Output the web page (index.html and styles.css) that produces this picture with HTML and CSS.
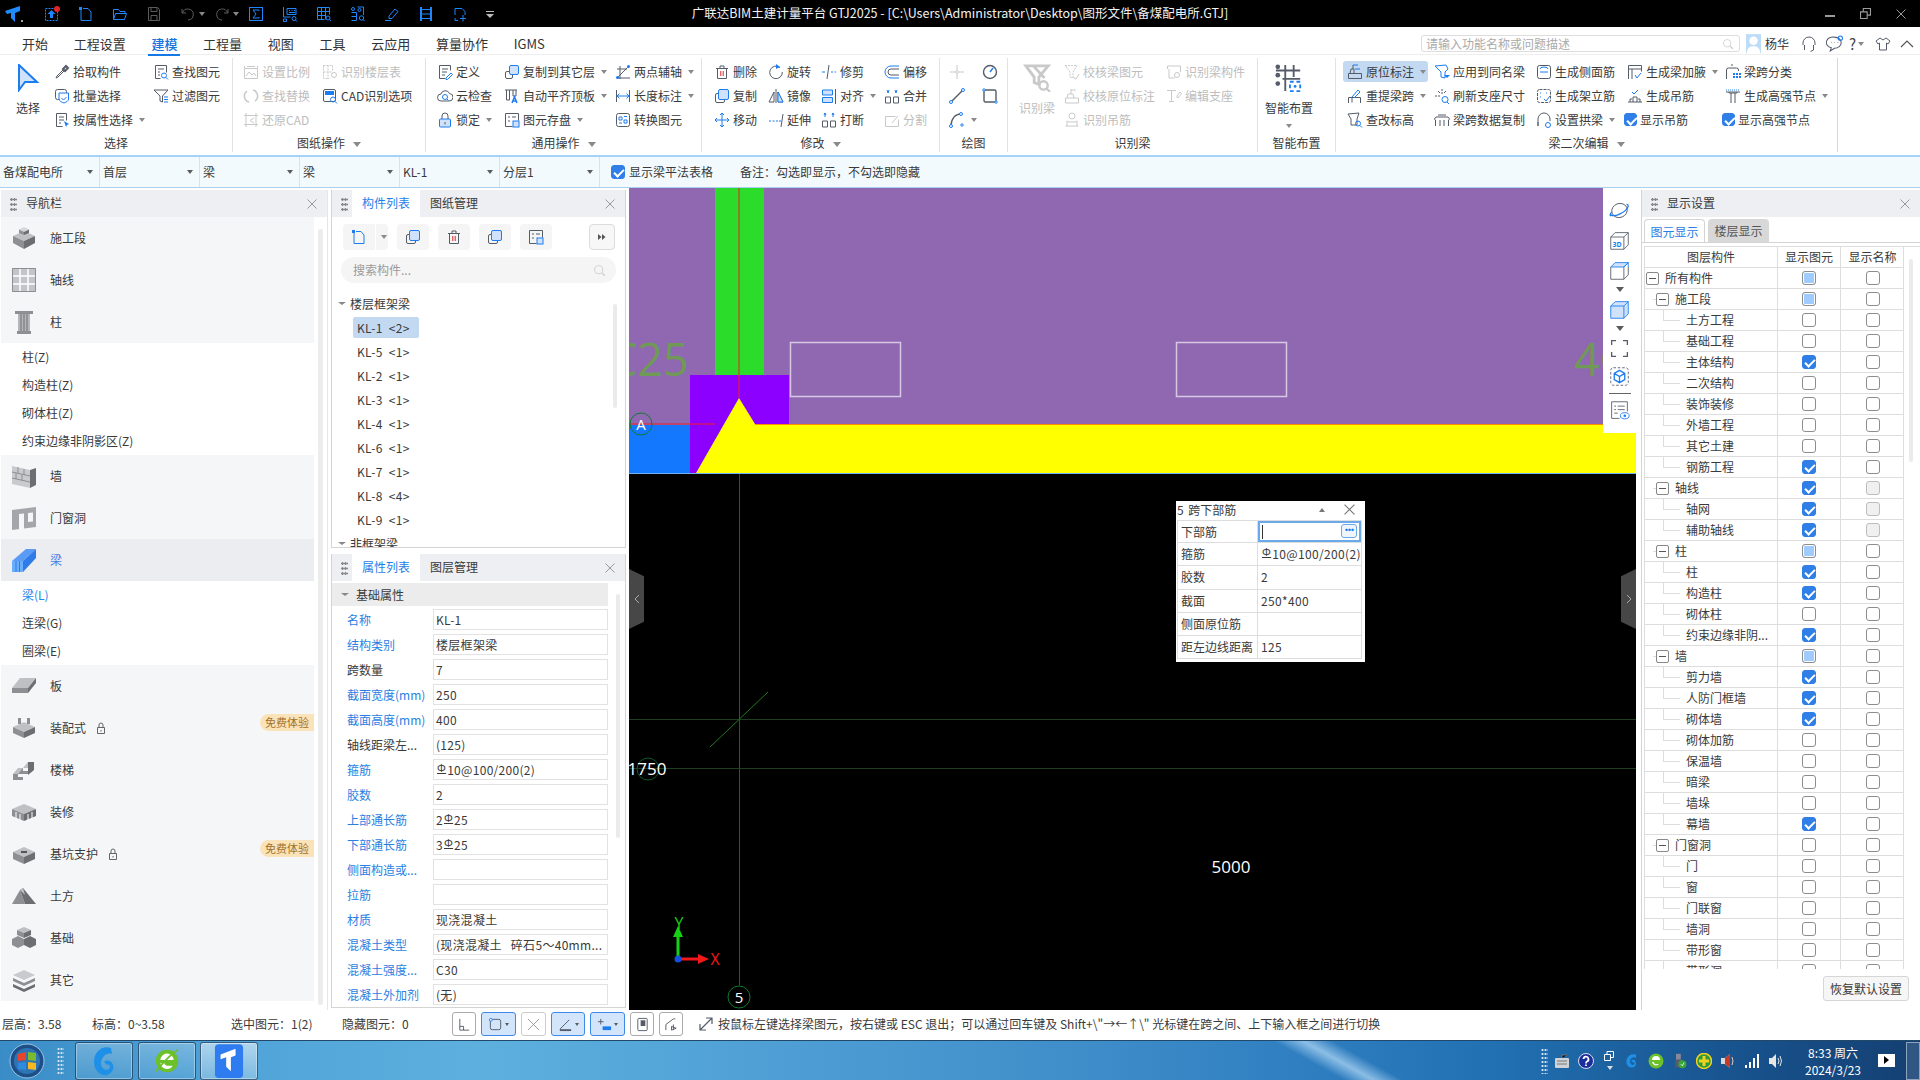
FILE: index.html
```html
<!DOCTYPE html>
<html lang="zh-CN">
<head>
<meta charset="utf-8">
<title>广联达BIM土建计量平台 GTJ2025</title>
<link rel="stylesheet" href="styles.css">
</head>
<body>
<svg class="defs" width="0" height="0" aria-hidden="true">
<symbol id="upl" viewBox="0 0 16 16"><rect class="b" stroke-dasharray="2 1" x="1.500" y="2.500" width="12" height="12"/><path class="f" d="M7.500 4l4 4H9v4H6V8H3.500z"/><circle fill="#e3242b" cx="13" cy="3" r="3"/></symbol>
<symbol id="new" viewBox="0 0 16 16"><path class="b" d="M3 3v11.500h10V6l-3-3.500H5"/><path class="f" d="M1 1h3v3H1z"/></symbol>
<symbol id="open" viewBox="0 0 16 16"><path class="b" d="M1.500 13.500v-10h5l1.500 2h5v2M1.500 13.500l2-6h11l-2 6z"/></symbol>
<symbol id="save" viewBox="0 0 16 16"><path class="k" d="M2.500 1.500h9l2 2v11h-11zM5 1.500v4h6v-4M5 14.500v-5h6v5"/></symbol>
<symbol id="undo" viewBox="0 0 16 16"><path class="k" d="M2 3v4h4M2.500 7A5.500 5.500 0 1 1 8 14"/></symbol>
<symbol id="redo" viewBox="0 0 16 16"><path class="k" d="M14 3v4h-4M13.500 7A5.500 5.500 0 1 0 8 14"/></symbol>
<symbol id="sig" viewBox="0 0 16 16"><rect class="b" x="1.500" y="1.500" width="13" height="13"/><path class="b" d="M11 5V4H5l3 4-3 4h6v-1"/></symbol>
<symbol id="lq" viewBox="0 0 16 16"><path class="b" d="M1.500 1v10h7M1.500 13h3v2.500h-3zM5 2.500h9v6H5zM7 4.500h1M9.500 4.500h1M12 4.500h1M7 6.500h6"/><circle class="b" cx="12" cy="12.500" r="2"/><path class="b" d="M13.500 14l1.500 1.500"/></symbol>
<symbol id="gq" viewBox="0 0 16 16"><path class="b" d="M1.500 1.500h12v7M1.500 1.500v12h7M5.500 1.500v12M9.500 1.500v12M1.500 5.500h12M1.500 9.500h8"/><circle class="b" cx="12" cy="12" r="2"/><path class="b" d="M13.500 13.500l1.500 1.500"/></symbol>
<symbol id="dq" viewBox="0 0 16 16"><circle class="b" cx="3" cy="3" r="1.500"/><path class="b" d="M7.500 1h6v8M1.500 6.500h5v8h-5M1.500 10.500h5"/><circle class="b" cx="9.500" cy="4" r="1.500"/><circle class="b" cx="11.500" cy="12" r="2.200"/><path class="b" d="M13 13.500l1.500 1.500"/></symbol>
<symbol id="pen" viewBox="0 0 16 16"><path class="b" d="M5 10l6-7 3 2.500-6 7H5zM1 14.500h6"/></symbol>
<symbol id="film" viewBox="0 0 16 16"><path class="b" stroke-width="2" d="M3 1v14M13 1v14"/><path class="b" d="M3 3.500h10M3 8h10M3 12.500h10"/></symbol>
<symbol id="dp" viewBox="0 0 16 16"><path class="b" d="M3 9V2.500h7l3 3V9M6 14.500H3V12M11 9v6.500M8 12.500h6"/></symbol>
<symbol id="pick" viewBox="0 0 16 16"><path class="k" fill="#555" stroke-width="2" d="M12 2l2 2-3 3-2-2z"/><path class="k" d="M9 6l-6 6-1 2 2-1 6-6"/></symbol>
<symbol id="batch" viewBox="0 0 16 16"><rect class="k" x="1.500" y="1.500" width="11" height="10" rx="2"/><path class="bw" d="M5 5h9.500v6c0 2-2 3-4.500 4-2.500-1-5-2-5-4z"/><path class="b" d="M7.500 10l2 2 3-3"/></symbol>
<symbol id="attr" viewBox="0 0 16 16"><path class="k" d="M2.500 14.500v-13h10v7M2.500 14.500h6M5 5h5M5 8h5M5 11h2"/><path class="f" d="M10 9l5 3-2 1-1 2z"/></symbol>
<symbol id="find" viewBox="0 0 16 16"><path class="k" d="M2.500 14.500v-13h11v7M2.500 14.500h5M5 5h6M5 8h2M5 11h2"/><circle class="b" cx="11" cy="11.500" r="2.500"/><path class="b" d="M13 13.500l2 2"/></symbol>
<symbol id="flt" viewBox="0 0 16 16"><path class="k" d="M1 2h14L9.500 8v6L7 13V8z"/><path class="b" d="M11 9h4M11 11.500h4M11 14h4"/></symbol>
<symbol id="sca" viewBox="0 0 16 16"><path class="k" d="M1.500 4.500h13v10h-13zM1.500 2v2M14.500 2v2M4 2.500h8"/><path class="k" d="M3 12l3-4 3 3 2-2 2 3"/></symbol>
<symbol id="idf" viewBox="0 0 16 16"><path class="k" stroke-dasharray="2 1" d="M1.500 1.500h9v5M1.500 1.500v13h6M1.500 8h9M6 1.500v13"/><circle class="k" cx="12" cy="11" r="2.500"/></symbol>
<symbol id="rep" viewBox="0 0 16 16"><path class="k" stroke-width="1.500" d="M4 3A6 6 0 0 0 4 13M12 3a6 6 0 0 1 0 10M3 13l3 1M13 3l-3-1"/></symbol>
<symbol id="cadq" viewBox="0 0 16 16"><rect class="k" x="1.500" y="1.500" width="12" height="12" rx="1.500"/><rect class="f" x="3" y="3" width="9" height="4"/><circle class="b" cx="11" cy="11.500" r="2.500"/><path class="b" d="M13 13.500l2 2"/></symbol>
<symbol id="rst" viewBox="0 0 16 16"><path class="k" d="M3 1v14M13 1v14M1 3.500h14M1 12.500h14M11 6L7 8.500l4 2.500"/></symbol>
<symbol id="def" viewBox="0 0 16 16"><path class="k" d="M2.500 14.500v-13h11v5M2.500 14.500h6M5 5h6M5 8h5M5 11h3"/><path class="b" d="M9 14l5-5 1.500 1.500-5 5H9z"/></symbol>
<symbol id="cld" viewBox="0 0 16 16"><path class="k" d="M4 13a3.500 3.500 0 0 1 0-7 4.500 4.500 0 0 1 8.500-.5A3.700 3.700 0 0 1 12 13z"/><circle class="b" cx="8" cy="9" r="2.500"/><path class="b" d="M10 11l1.500 1.500"/></symbol>
<symbol id="lck" viewBox="0 0 16 16"><rect class="l" x="2.500" y="7" width="11" height="8" rx="1"/><path class="k" d="M5 7V4a3 3 0 0 1 6 0v3"/><path class="k" d="M8 10v2.500"/></symbol>
<symbol id="cpt" viewBox="0 0 16 16"><rect class="k" x="1.500" y="7.500" width="7" height="7" rx="1.500"/><rect class="l" x="5.500" y="1.500" width="9" height="9" rx="1.500"/></symbol>
<symbol id="alt" viewBox="0 0 16 16"><path class="k" d="M1 2h12M2.500 2v10h3V2M9 2v6h3V2"/><path class="b" stroke-width="1.500" d="M8 15l2.500-6 2.500 6M9 13h3"/></symbol>
<symbol id="sel" viewBox="0 0 16 16"><path class="k" d="M1.500 1.500h13v7M1.500 1.500v13h7M4 5h2M8 5h4M4 9h2"/><rect class="l" x="9" y="9" width="6" height="6"/></symbol>
<symbol id="two" viewBox="0 0 16 16"><path class="k" d="M2 14L14 2M2 14h13M5 2v13M2 5h10"/><circle class="f" cx="2.500" cy="13.500" r="1.500"/><circle class="f" cx="13.500" cy="2.500" r="1.500"/></symbol>
<symbol id="len" viewBox="0 0 16 16"><path class="k" d="M1.500 2v12M14.500 2v12"/><path class="b" d="M2 8h12M4.500 5.500L2 8l2.500 2.500M11.500 5.500L14 8l-2.500 2.500"/></symbol>
<symbol id="cnv" viewBox="0 0 16 16"><rect class="k" x="1.500" y="1.500" width="13" height="13" rx="2"/><path class="b" d="M4 5h3v3H4zM9 8h3v3H9zM4 11h3M9 4.500h3"/></symbol>
<symbol id="del" viewBox="0 0 16 16"><path class="k" d="M3.500 4.500h9v10h-9zM2 4.500h12M6 4.500V2h4v2.500"/><path class="r" d="M6.800 7v5M9.200 7v5"/></symbol>
<symbol id="cpy" viewBox="0 0 16 16"><rect class="k" x="1.500" y="5.500" width="9" height="9" rx="1.500"/><rect class="l" x="4.500" y="1.500" width="10" height="10" rx="1.500"/></symbol>
<symbol id="mov" viewBox="0 0 16 16"><path class="b" d="M8 1v14M1 8h14M6 3l2-2 2 2M6 13l2 2 2-2M3 6L1 8l2 2M13 6l2 2-2 2"/></symbol>
<symbol id="rot" viewBox="0 0 16 16"><path class="k" d="M12 3.500A6.300 6.300 0 1 0 14.300 8"/><path class="f" d="M8 0l4 3-4 2z"/></symbol>
<symbol id="mir" viewBox="0 0 16 16"><path class="k" d="M8 1v14M1 14l5-10v10zM15 14L10 4v10z"/><path class="l" d="M10 4l5 10h-5z"/></symbol>
<symbol id="ext" viewBox="0 0 16 16"><path class="b" d="M1 9h2M4.500 9h2M8 9h2M11 9h2"/><path class="k" d="M15 2l-2 13"/></symbol>
<symbol id="trm" viewBox="0 0 16 16"><path class="k" d="M8 1L6 15"/><path class="b" d="M1 8h3M10 8h2M13.500 8H15"/></symbol>
<symbol id="aln" viewBox="0 0 16 16"><path class="l" d="M1.500 2h10v5h-10zM1.500 9.500h10v5h-10z"/><path class="k" d="M14.500 1v15"/></symbol>
<symbol id="brk" viewBox="0 0 16 16"><path class="k" d="M1.500 9h5v6h-5zM9.500 9h5v6h-5z"/><path class="b" d="M3 3l1-2 1 2M4 1v4M11 3l1-2 1 2M12 1v4"/></symbol>
<symbol id="ofs" viewBox="0 0 16 16"><path class="b" d="M15 2H7a6 6 0 0 0 0 12h8"/><path class="k" d="M15 5H7a3 3 0 0 0 0 6h8"/></symbol>
<symbol id="mrg" viewBox="0 0 16 16"><path class="k" d="M1.500 9h5v6h-5zM9.500 9h5v6h-5z"/><path class="b" d="M3 2l1 3 1-3M11 2l1 3 1-3"/></symbol>
<symbol id="spl" viewBox="0 0 16 16"><path class="k" d="M1.500 4.500h10M1.500 4.500v10h13v-7M8 11l6-7"/></symbol>
<symbol id="pt" viewBox="0 0 16 16"><path class="k" d="M8 1v5M8 10v5M1 8h5M10 8h5"/><circle class="b" cx="8" cy="8" r="1.500"/></symbol>
<symbol id="arcc" viewBox="0 0 16 16"><circle class="k" stroke-width="1.400" cx="8" cy="8" r="6.500"/><path class="b" stroke-width="1.400" d="M8 8l3-4"/></symbol>
<symbol id="lin" viewBox="0 0 16 16"><path class="k" stroke-width="1.400" d="M2 14L14 2"/><circle class="bw" cx="2" cy="14" r="1.500"/><circle class="bw" cx="14" cy="2" r="1.500"/></symbol>
<symbol id="rct" viewBox="0 0 16 16"><rect class="k" stroke-width="1.400" x="2" y="2" width="12" height="12" rx="1.500"/><circle class="bw" cx="2" cy="2" r="1.200"/><circle class="bw" cx="14" cy="14" r="1.200"/></symbol>
<symbol id="arc" viewBox="0 0 16 16"><path class="k" stroke-width="1.400" d="M2 14C2 7 6 2 12 2"/><circle class="bw" cx="2" cy="14" r="1.500"/><circle class="bw" cx="12" cy="2" r="1.500"/><circle class="bw" cx="13" cy="13" r="1.200"/></symbol>
<symbol id="vrf" viewBox="0 0 16 16"><path class="k" stroke-dasharray="2 1" d="M1 1.500h12L9 8v6L6 13V8z"/><path class="k" d="M9 13l3 2 3-5"/></symbol>
<symbol id="vor" viewBox="0 0 16 16"><path class="k" d="M1.500 10h13v5h-13zM3 10l1-4h5l1 4M7 1v5M7 2h5"/></symbol>
<symbol id="hng" viewBox="0 0 16 16"><circle class="k" cx="8" cy="4" r="3"/><path class="k" d="M1.500 14h13M3 14V9l2 1h6l2-1v5"/></symbol>
<symbol id="idc" viewBox="0 0 16 16"><path class="k" d="M1.500 2h13v6M1.500 2v3M3 5v9h6"/><circle class="k" cx="11" cy="11" r="2.500"/></symbol>
<symbol id="esp" viewBox="0 0 16 16"><path class="k" d="M1 2.500h9M5.500 2.500v11M3 13.500h5"/><path class="k" d="M11 8l3-4 1.500 1.500-3 4H11z"/></symbol>
<symbol id="yw" viewBox="0 0 16 16"><path class="k" d="M1.500 9.500h13v5h-13zM3 9.500L4 5h3v4.500M6 1v4"/><path class="b" d="M6 1h5M8 5h5"/></symbol>
<symbol id="cxs" viewBox="0 0 16 16"><path class="k" d="M1 2l11-1-2 6v6H4V7z"/><circle class="b" cx="11" cy="11.500" r="2.500"/><path class="b" d="M13 13.500l2 2"/></symbol>
<symbol id="cts" viewBox="0 0 16 16"><path class="k" d="M1.500 15V9.500h12V15M5 9.500v5"/><path class="b" d="M5 9l6-7 2 2-6 6"/></symbol>
<symbol id="app" viewBox="0 0 16 16"><path class="b" d="M1 2l11-1 2 4-3 3v6l-4-1V8z"/><path class="f" d="M10 11h6l-3 3z"/></symbol>
<symbol id="rfr" viewBox="0 0 16 16"><path class="k" stroke-dasharray="2 1" d="M1 8h5M8 1v5"/><path class="k" d="M4 3l2 2M12 3l-2 2"/><circle class="b" cx="11" cy="11.500" r="3"/><path class="b" d="M13 14l2 2"/></symbol>
<symbol id="kfz" viewBox="0 0 16 16"><path class="k" d="M1 8a2 2 0 0 1 2-3h10a2 2 0 0 1 2 3M1.500 8v6M14.500 8v6M6 8v6M10 8v6M4 3h8"/></symbol>
<symbol id="sde" viewBox="0 0 16 16"><rect class="k" x="1.500" y="1.500" width="13" height="13" rx="2"/><path class="b" d="M4 5a4 2 0 0 1 8 0M4 8h8"/></symbol>
<symbol id="erc" viewBox="0 0 16 16"><rect class="k" stroke-dasharray="3 1" x="1.500" y="1.500" width="13" height="13" rx="2"/><path class="b" d="M4 5h1M10 5h1M4 9h1M8 11l2 2 4-5"/></symbol>
<symbol id="gng" viewBox="0 0 16 16"><path class="k" d="M2 14V7a6 6 0 0 1 12 0v2M2 10v4"/><circle class="b" cx="12" cy="13" r="2.500"/></symbol>
<symbol id="jy" viewBox="0 0 16 16"><path class="k" d="M1.500 15V1.500h13v6M1.500 5h13M5 5v10"/><path class="b" d="M8 11l2 3 4-5"/></symbol>
<symbol id="dj" viewBox="0 0 16 16"><path class="k" d="M1 14h14M3 14v-3h2M13 14v-3h-2M6 14V9h4v5"/><path class="b" d="M5 4l2 2 4-4"/></symbol>
<symbol id="fl" viewBox="0 0 16 16"><path class="k" d="M1.500 15V6a2 2 0 0 1 2-2h8a2 2 0 0 1 2 2v1M6 1h2"/><path class="f" d="M8 9h2v2H8zM11 9h2v2h-2zM14 9h2v2h-2zM8 12h2v2H8zM11 12h2v2h-2zM14 12h2v2h-2z"/></symbol>
<symbol id="gqj" viewBox="0 0 16 16"><path class="b" stroke-dasharray="1 1" d="M1 2h14"/><path class="k" d="M1 4h14M4 4v1h8V4M6 5v10M10 5v10"/></symbol>
<symbol id="mag" viewBox="0 0 16 16"><circle class="k" cx="7" cy="7" r="5"/><path class="k" stroke-width="1.500" d="M11 11l3.500 3.500"/></symbol>
<symbol id="hds" viewBox="0 0 16 16"><path class="k" d="M2 9V7a6 6 0 0 1 12 0v2M3.500 9v5M12.500 9v5M12.500 14l-3 1.500"/></symbol>
<symbol id="cht" viewBox="0 0 16 16"><path class="k" d="M8 2a6 5 0 1 0-3 10l-1 3 4-2.500A6 5 0 0 0 8 2zM5 7h.5M8 7h.5M11 7h.5"/><circle class="b" cx="13.500" cy="3" r="2"/></symbol>
<symbol id="shr" viewBox="0 0 16 16"><path class="k" d="M5 2L1 5l2 3 1.500-1v7h7V7L13 8l2-3-4-3-3 2z"/></symbol>
<symbol id="mvh" viewBox="0 0 16 16"><path class="k" stroke-width="1.200" d="M2 14L14 2M2 8v6h6M8 2h6v6"/></symbol>
<symbol id="sb1" viewBox="0 0 16 16"><path class="k" d="M3 2v12h10M3 10h4v4"/></symbol>
<symbol id="sb2" viewBox="0 0 16 16"><rect class="k" x="2.500" y="2.500" width="11" height="11" rx="2"/><circle class="bw" cx="3" cy="3" r="1.500"/></symbol>
<symbol id="sb3" viewBox="0 0 16 16"><path class="k" d="M2 2l12 12M14 2L2 14"/></symbol>
<symbol id="sb4" viewBox="0 0 16 16"><path class="k" d="M2 13L12 3"/><path class="k" stroke-width="2" d="M2 14h12"/></symbol>
<symbol id="sb5" viewBox="0 0 16 16"><path class="k" d="M4 2v6M1 5h6"/><path class="f" d="M6 10h9v4H6z"/></symbol>
<symbol id="sb6" viewBox="0 0 16 16"><rect class="k" x="3" y="1.500" width="10" height="13" rx="1"/><path class="k" fill="#555" stroke-width="3" d="M6 5h5M6 8h5"/></symbol>
<symbol id="sb7" viewBox="0 0 16 16"><path class="k" d="M2 14V8l8-6h2M10 8v6M8 10l5 2-5 2z"/></symbol>
<symbol id="pln" viewBox="0 0 24 24"><ellipse class="k" cx="12" cy="12" rx="9" ry="8" transform="rotate(-20 12 12)"/><path class="b" stroke-width="1.500" d="M2 17c4 3 18-3 20-10M3 14c-2 2-2 4-1 4M20 5c1 0 2 1 2 2"/></symbol>
<symbol id="cub" viewBox="0 0 24 24"><path class="k" d="M2 8v14h15V8M17 22l5-5V8"/><path class="l" d="M2 8l5-5h15l-5 5z"/><path class="b" d="M17 8l5-5v5"/></symbol>
<symbol id="cuf" viewBox="0 0 24 24"><path class="l" d="M2 8l5-5h15v14l-5 5H2z"/><path class="b" d="M2 8h15v14M17 8l5-5"/></symbol>
<symbol id="frm" viewBox="0 0 24 24"><path class="k" stroke-width="1.500" d="M8 3H3v5M16 3h5v5M3 16v5h5M21 16v5h-5"/></symbol>
<symbol id="cbd" viewBox="0 0 24 24"><rect class="k" stroke-dasharray="3 2" x="2" y="2" width="20" height="20" rx="3"/><path class="b" stroke-width="1.500" d="M12 5l6 3.500v7L12 19l-6-3.500v-7zM6 8.500l6 3.500 6-3.500M12 12v7"/></symbol>
<symbol id="lst" viewBox="0 0 24 24"><path class="k" d="M12 21H3V2h18v11M6 7h2M10 7h8M6 11h2M10 11h8M6 15h4"/><ellipse class="b" cx="18" cy="18" rx="5" ry="3.500"/><circle class="f" cx="18" cy="18" r="1.500"/></symbol>
<symbol id="n-seg" viewBox="0 0 24 24"><path fill="#bfc0c4" d="M12 5l11 5-11 5L1 10z"/><path fill="#8e8f93" d="M1 10l11 5v8L1 17z"/><path fill="#6d6e72" d="M23 10l-11 5v8l11-6z"/><path fill="#d6d7da" d="M12 1l5 2.500-5 2.500-5-2.500z"/><path fill="#8e8f93" d="M7 3.500l5 2.500v3L7 7z"/><path fill="#6d6e72" d="M17 3.500L12 6v3l5-2z"/></symbol>
<symbol id="n-axs" viewBox="0 0 24 24"><rect fill="#c4c5c8" x="0" y="0" width="24" height="24"/><path stroke="#fff" stroke-width="1.500" d="M8 1v22M16 1v22M1 8h22M1 16h22"/><path fill="none" stroke="#8e8f93" d="M.5.500h23v23H.5z"/></symbol>
<symbol id="n-col" viewBox="0 0 24 24"><path fill="#8e8f93" d="M3 1h18v3H3zM5 21h14v3H5z"/><path fill="#b5b6b9" d="M6 4h12v17H6z"/><path stroke="#6d6e72" d="M9 4v17M12 4v17M15 4v17"/></symbol>
<symbol id="n-wal" viewBox="0 0 24 24"><path fill="#c9cacd" d="M0 2l18 4v18L0 20z"/><path fill="#6d6e72" d="M18 6l6-2v17l-6 3z"/><path stroke="#8e8f93" fill="none" d="M0 8l18 4M0 14l18 4M6 3v6M12 5v6M4 9v6M10 11v6"/></symbol>
<symbol id="n-dor" viewBox="0 0 24 24"><path fill="#a5a6a9" d="M0 4l24-3v20l-24 3z"/><path fill="#f5f6f8" d="M7 8l5-.6V23H7zM16 7l5-.5v9l-5 .5z"/></symbol>
<symbol id="n-bem" viewBox="0 0 24 24"><path fill="#5a9cf5" d="M0 13L14 1h10L11 13z"/><path fill="#2f7be8" d="M11 13L24 1v9L11 24z"/><path fill="#6aaefb" d="M0 13h11v11H0z"/><path stroke="#2f7be8" d="M4 13v11M7.500 13v11"/></symbol>
<symbol id="n-slb" viewBox="0 0 24 24"><path fill="#bfc0c4" d="M8 4h16L16 14H0z"/><path fill="#8e8f93" d="M0 14h16v5H0z"/><path fill="#6d6e72" d="M16 14l8-10v5l-8 10z"/></symbol>
<symbol id="n-pre" viewBox="0 0 24 24"><path fill="#bfc0c4" d="M12 6l11 5-11 5L1 11z"/><path fill="#8e8f93" d="M1 11l11 5v6L1 17z"/><path fill="#6d6e72" d="M23 11l-11 5v6l11-5z"/><path fill="#8e8f93" d="M6 2h3v6H6zM15 2h3v6h-3z"/></symbol>
<symbol id="n-str" viewBox="0 0 24 24"><path fill="#8e8f93" d="M1 16h5v3h5v-3h0v6H1zM6 10h5v3h5v-3h0v6H6z"/><path fill="#bfc0c4" d="M1 16l5-6h5l-5 6zM11 10l5-6h5l-5 6z"/><path fill="#6d6e72" d="M16 4h6v8l-6 5z"/></symbol>
<symbol id="n-dec" viewBox="0 0 24 24"><path fill="#bfc0c4" d="M0 9l12-5 12 5-12 5z"/><path fill="#8e8f93" d="M0 9l12 5v7L0 16z"/><path fill="#6d6e72" d="M24 9l-12 5v7l12-5z"/><path stroke="#fff" d="M4 12v6M8 14v6M16 14v6M20 12v6"/></symbol>
<symbol id="n-sup" viewBox="0 0 24 24"><path fill="#bfc0c4" d="M12 5l11 5-11 5L1 10z"/><path fill="#8e8f93" d="M1 10l11 5v7L1 17z"/><path fill="#6d6e72" d="M23 10l-11 5v7l11-5z"/><path fill="#555" d="M9 9h6v2H9z"/></symbol>
<symbol id="n-ear" viewBox="0 0 24 24"><path fill="#8e8f93" d="M0 20L8 6l5 14z"/><path fill="#6d6e72" d="M13 20L8 6l3-2 13 16z"/><path fill="#bfc0c4" d="M8 6l3-2 2 7z"/></symbol>
<symbol id="n-fnd" viewBox="0 0 24 24"><path fill="#bfc0c4" d="M12 1l7 3-7 3-7-3z"/><path fill="#8e8f93" d="M5 4l7 3v5l-7-3zM0 13l6-3 6 3v6l-6 3-6-3z"/><path fill="#6d6e72" d="M19 4l-7 3v5l7-3zM12 13l6-3 6 3v6l-6 3-6-3z"/></symbol>
<symbol id="n-oth" viewBox="0 0 24 24"><path fill="#c9cacd" d="M12 2l11 5-11 5L1 7z"/><path fill="#8e8f93" d="M1 10l11 5 11-5v3l-11 5-11-5z"/><path fill="#6d6e72" d="M1 16l11 5 11-5v3l-11 5-11-5z"/></symbol>
</svg>

<div class="screen">
<header class="title">
  <div class="qat">
    <svg class="logo" viewBox="0 0 18 18"><path fill="#1f8bff" d="M0 6L15 1v5l-5 2v9l-4-4V8L2 9z"/><path fill="#9aa" d="M16 15h2v2h-2z"/></svg>
    <svg class="i"><use href="#upl"/></svg><svg class="i"><use href="#new"/></svg><svg class="i"><use href="#open"/></svg>
    <svg class="i dim"><use href="#save"/></svg>
    <span class="qa2"><svg class="i dim"><use href="#undo"/></svg><b class="ar"></b></span>
    <span class="qa2"><svg class="i dim"><use href="#redo"/></svg><b class="ar"></b></span>
    <svg class="i"><use href="#sig"/></svg><svg class="i"><use href="#lq"/></svg><svg class="i"><use href="#gq"/></svg><svg class="i"><use href="#dq"/></svg><svg class="i"><use href="#pen"/></svg><svg class="i"><use href="#film"/></svg><svg class="i"><use href="#dp"/></svg>
    <b class="qmore"></b>
  </div>
  <div class="ttl">广联达BIM土建计量平台 GTJ2025 - [C:\Users\Administrator\Desktop\图形文件\备煤配电所.GTJ]</div>
  <div class="win">
    <span class="w-min"></span>
    <svg class="w-res" viewBox="0 0 10 10"><path fill="none" stroke="#9a9a9a" d="M.5 3.500h6v6h-6zM3 3.500V.5h6.500v6h-3"/></svg>
    <svg class="w-cls" viewBox="0 0 10 10"><path stroke="#9a9a9a" d="M.5.500l9 9M9.500.500l-9 9"/></svg>
  </div>
</header>

<nav class="tabs">
  <span class="tab">开始</span><span class="tab">工程设置</span><span class="tab on">建模</span><span class="tab">工程量</span><span class="tab">视图</span><span class="tab">工具</span><span class="tab">云应用</span><span class="tab">算量协作</span><span class="tab">IGMS</span>
  <div class="tabr">
    <div class="srch"><span>请输入功能名称或问题描述</span><svg class="i off"><use href="#mag"/></svg></div>
    <div class="ava"><svg viewBox="0 0 16 20"><rect width="16" height="20" fill="#bcdcf7"/><circle cx="8" cy="7" r="4.500" fill="#fff"/><path fill="#fff" d="M1 20c0-5 3-7 7-7s7 2 7 7z"/></svg><span>杨华</span></div>
    <svg class="i t1"><use href="#hds"/></svg><svg class="i t2"><use href="#cht"/></svg><span class="qm">?<b class="ar"></b></span><svg class="i t3"><use href="#shr"/></svg><svg class="cr" viewBox="0 0 14 8"><path fill="none" stroke="#555" stroke-width="1.200" d="M1 7l6-6 6 6"/></svg>
  </div>
</nav>

<section class="ribbon">
  <div class="grp g1">
    <div class="gb">
      <div class="big bg1"><svg class="bigi" viewBox="0 0 24 28"><path fill="#cfe3fb" stroke="#1c7cf0" stroke-width="2" d="M3 1l18 17H9l-6 8z"/></svg><span>选择</span></div>
      <div class="col w99">
        <div class="ri"><svg class="i"><use href="#pick"/></svg><span>拾取构件</span></div>
        <div class="ri"><svg class="i"><use href="#batch"/></svg><span>批量选择</span></div>
        <div class="ri"><svg class="i"><use href="#attr"/></svg><span>按属性选择</span><b class="ar"></b></div>
      </div>
      <div class="col">
        <div class="ri"><svg class="i"><use href="#find"/></svg><span>查找图元</span></div>
        <div class="ri"><svg class="i"><use href="#flt"/></svg><span>过滤图元</span></div>
      </div>
    </div>
    <div class="gl">选择</div>
  </div>
  <div class="grp g2">
    <div class="gb">
      <div class="col w79 off">
        <div class="ri"><svg class="i"><use href="#sca"/></svg><span>设置比例</span></div>
        <div class="ri"><svg class="i"><use href="#rep"/></svg><span>查找替换</span></div>
        <div class="ri"><svg class="i"><use href="#rst"/></svg><span>还原CAD</span></div>
      </div>
      <div class="col">
        <div class="ri off"><svg class="i"><use href="#idf"/></svg><span>识别楼层表</span></div>
        <div class="ri"><svg class="i"><use href="#cadq"/></svg><span>CAD识别选项</span></div>
      </div>
    </div>
    <div class="gl">图纸操作<b class="ar ar2"></b></div>
  </div>
  <div class="grp g3">
    <div class="gb">
      <div class="col w67">
        <div class="ri"><svg class="i"><use href="#def"/></svg><span>定义</span></div>
        <div class="ri"><svg class="i"><use href="#cld"/></svg><span>云检查</span></div>
        <div class="ri"><svg class="i"><use href="#lck"/></svg><span>锁定</span><b class="ar"></b></div>
      </div>
      <div class="col w111">
        <div class="ri"><svg class="i"><use href="#cpt"/></svg><span>复制到其它层</span><b class="ar"></b></div>
        <div class="ri"><svg class="i"><use href="#alt"/></svg><span>自动平齐顶板</span><b class="ar"></b></div>
        <div class="ri"><svg class="i"><use href="#sel"/></svg><span>图元存盘</span><b class="ar"></b></div>
      </div>
      <div class="col">
        <div class="ri"><svg class="i"><use href="#two"/></svg><span>两点辅轴</span><b class="ar"></b></div>
        <div class="ri"><svg class="i"><use href="#len"/></svg><span>长度标注</span><b class="ar"></b></div>
        <div class="ri"><svg class="i"><use href="#cnv"/></svg><span>转换图元</span></div>
      </div>
    </div>
    <div class="gl">通用操作<b class="ar ar2"></b></div>
  </div>
  <div class="grp g4">
    <div class="gb">
      <div class="col w54">
        <div class="ri"><svg class="i"><use href="#del"/></svg><span>删除</span></div>
        <div class="ri"><svg class="i"><use href="#cpy"/></svg><span>复制</span></div>
        <div class="ri"><svg class="i"><use href="#mov"/></svg><span>移动</span></div>
      </div>
      <div class="col w53">
        <div class="ri"><svg class="i"><use href="#rot"/></svg><span>旋转</span></div>
        <div class="ri"><svg class="i"><use href="#mir"/></svg><span>镜像</span></div>
        <div class="ri"><svg class="i"><use href="#ext"/></svg><span>延伸</span></div>
      </div>
      <div class="col w63">
        <div class="ri"><svg class="i"><use href="#trm"/></svg><span>修剪</span></div>
        <div class="ri"><svg class="i"><use href="#aln"/></svg><span>对齐</span><b class="ar"></b></div>
        <div class="ri"><svg class="i"><use href="#brk"/></svg><span>打断</span></div>
      </div>
      <div class="col">
        <div class="ri"><svg class="i"><use href="#ofs"/></svg><span>偏移</span></div>
        <div class="ri"><svg class="i"><use href="#mrg"/></svg><span>合并</span></div>
        <div class="ri off"><svg class="i"><use href="#spl"/></svg><span>分割</span></div>
      </div>
    </div>
    <div class="gl">修改<b class="ar ar2"></b></div>
  </div>
  <div class="grp g5">
    <div class="gb">
      <div class="col w33">
        <div class="ri off"><svg class="i"><use href="#pt"/></svg></div>
        <div class="ri"><svg class="i"><use href="#lin"/></svg></div>
        <div class="ri"><svg class="i"><use href="#arc"/></svg><b class="ar"></b></div>
      </div>
      <div class="col">
        <div class="ri"><svg class="i"><use href="#arcc"/></svg></div>
        <div class="ri"><svg class="i"><use href="#rct"/></svg></div>
      </div>
    </div>
    <div class="gl">绘图</div>
  </div>
  <div class="grp g6">
    <div class="gb">
      <div class="big bg6 off"><svg class="bigi" viewBox="0 0 28 30"><path fill="none" stroke="#c9c9c9" stroke-width="3" d="M2 2h24L16 14v8l-5-2v-6zM10 2l12 13"/><circle cx="21" cy="23" r="4.500" fill="none" stroke="#c9c9c9" stroke-width="2.500"/><path stroke="#c9c9c9" stroke-width="2.500" d="M24 26l4 4"/></svg><span>识别梁</span></div>
      <div class="col w102 off">
        <div class="ri"><svg class="i"><use href="#vrf"/></svg><span>校核梁图元</span></div>
        <div class="ri"><svg class="i"><use href="#vor"/></svg><span>校核原位标注</span></div>
        <div class="ri"><svg class="i"><use href="#hng"/></svg><span>识别吊筋</span></div>
      </div>
      <div class="col off">
        <div class="ri"><svg class="i"><use href="#idc"/></svg><span>识别梁构件</span></div>
        <div class="ri"><svg class="i"><use href="#esp"/></svg><span>编辑支座</span></div>
      </div>
    </div>
    <div class="gl">识别梁</div>
  </div>
  <div class="grp g7">
    <div class="gb">
      <div class="big bg7"><svg class="bigi" viewBox="0 0 30 30"><g fill="#555c68"><circle cx="3" cy="3" r="2.500"/><circle cx="3" cy="12" r="2.500"/><circle cx="3" cy="21" r="2.500"/></g><path fill="none" stroke="#555c68" stroke-width="2" d="M11 1v28M20 1v13M1 7h26M8 16h19"/><rect x="16" y="19" width="11" height="10" fill="none" stroke="#1c7cf0" stroke-width="2" stroke-dasharray="4 3"/><circle cx="21.500" cy="24" r="1.500" fill="#1c7cf0"/></svg><span>智能布置</span><b class="ar bar"></b></div>
    </div>
    <div class="gl">智能布置</div>
  </div>
  <div class="grp g8">
    <div class="gb">
      <div class="col w91">
        <div class="ri pl hl"><svg class="i"><use href="#yw"/></svg><span>原位标注</span><b class="ar"></b></div>
        <div class="ri pl"><svg class="i"><use href="#cts"/></svg><span>重提梁跨</span><b class="ar"></b></div>
        <div class="ri pl"><svg class="i"><use href="#cxs"/></svg><span>查改标高</span></div>
      </div>
      <div class="col w102">
        <div class="ri"><svg class="i"><use href="#app"/></svg><span>应用到同名梁</span></div>
        <div class="ri"><svg class="i"><use href="#rfr"/></svg><span>刷新支座尺寸</span></div>
        <div class="ri"><svg class="i"><use href="#kfz"/></svg><span>梁跨数据复制</span></div>
      </div>
      <div class="col w91">
        <div class="ri"><svg class="i"><use href="#sde"/></svg><span>生成侧面筋</span></div>
        <div class="ri"><svg class="i"><use href="#erc"/></svg><span>生成架立筋</span></div>
        <div class="ri"><svg class="i"><use href="#gng"/></svg><span>设置拱梁</span><b class="ar"></b></div>
      </div>
      <div class="col w98">
        <div class="ri"><svg class="i"><use href="#jy"/></svg><span>生成梁加腋</span><b class="ar"></b></div>
        <div class="ri"><svg class="i"><use href="#dj"/></svg><span>生成吊筋</span></div>
        <div class="ri nl3"><i class="cb on"></i><span>显示吊筋</span></div>
      </div>
      <div class="col">
        <div class="ri"><svg class="i"><use href="#fl"/></svg><span>梁跨分类</span></div>
        <div class="ri"><svg class="i"><use href="#gqj"/></svg><span>生成高强节点</span><b class="ar"></b></div>
        <div class="ri nl3"><i class="cb on"></i><span>显示高强节点</span></div>
      </div>
    </div>
    <div class="gl">梁二次编辑<b class="ar ar2"></b></div>
  </div>
</section>

<section class="selbar">
  <div class="cmb"><span>备煤配电所</span><b class="ar dk"></b></div>
  <div class="cmb"><span>首层</span><b class="ar dk"></b></div>
  <div class="cmb"><span>梁</span><b class="ar dk"></b></div>
  <div class="cmb"><span>梁</span><b class="ar dk"></b></div>
  <div class="cmb"><span>KL-1</span><b class="ar dk"></b></div>
  <div class="cmb"><span>分层1</span><b class="ar dk"></b></div>
  <div class="sck"><i class="cb on"></i><span>显示梁平法表格</span></div>
  <div class="note">备注：勾选即显示，不勾选即隐藏</div>
</section>

<main class="main">
  <aside class="nav">
    <div class="phead"><i class="grip"></i><span class="ptitle">导航栏</span><svg class="px" viewBox="0 0 10 10"><path stroke="#999" d="M.5.500l9 9M9.500.500l-9 9"/></svg></div>
    <div class="nbody">
      <div class="nv"><svg class="ni"><use href="#n-seg"/></svg><span>施工段</span></div>
      <div class="nv"><svg class="ni"><use href="#n-axs"/></svg><span>轴线</span></div>
      <div class="nv"><svg class="ni"><use href="#n-col"/></svg><span>柱</span></div>
      <div class="ns">柱(Z)</div><div class="ns">构造柱(Z)</div><div class="ns">砌体柱(Z)</div><div class="ns">约束边缘非阴影区(Z)</div>
      <div class="nv"><svg class="ni"><use href="#n-wal"/></svg><span>墙</span></div>
      <div class="nv"><svg class="ni"><use href="#n-dor"/></svg><span>门窗洞</span></div>
      <div class="nv act"><svg class="ni"><use href="#n-bem"/></svg><span>梁</span></div>
      <div class="ns act">梁(L)</div><div class="ns">连梁(G)</div><div class="ns">圈梁(E)</div>
      <div class="nv"><svg class="ni"><use href="#n-slb"/></svg><span>板</span></div>
      <div class="nv"><svg class="ni"><use href="#n-pre"/></svg><span>装配式</span><svg class="lk" viewBox="0 0 10 12"><path fill="none" stroke="#666" d="M1.500 5.500h7v6h-7zM3 5.500V3a2 2 0 0 1 4 0v2.500M5 8v1.500"/></svg><em class="tag">免费体验</em></div>
      <div class="nv"><svg class="ni"><use href="#n-str"/></svg><span>楼梯</span></div>
      <div class="nv"><svg class="ni"><use href="#n-dec"/></svg><span>装修</span></div>
      <div class="nv"><svg class="ni"><use href="#n-sup"/></svg><span>基坑支护</span><svg class="lk" viewBox="0 0 10 12"><path fill="none" stroke="#666" d="M1.500 5.500h7v6h-7zM3 5.500V3a2 2 0 0 1 4 0v2.500M5 8v1.500"/></svg><em class="tag">免费体验</em></div>
      <div class="nv"><svg class="ni"><use href="#n-ear"/></svg><span>土方</span></div>
      <div class="nv"><svg class="ni"><use href="#n-fnd"/></svg><span>基础</span></div>
      <div class="nv"><svg class="ni"><use href="#n-oth"/></svg><span>其它</span></div>
      <i class="nscroll"></i>
    </div>
  </aside>

  <div class="mid">
    <section class="panel comp">
      <div class="phead"><i class="grip"></i><span class="ptab on">构件列表</span><span class="ptab">图纸管理</span><svg class="px" viewBox="0 0 10 10"><path stroke="#999" d="M.5.500l9 9M9.500.500l-9 9"/></svg></div>
      <div class="tbar">
        <div class="tb tb-split"><svg class="i"><use href="#new"/></svg><i></i><b class="ar"></b></div>
        <div class="tb"><svg class="i"><use href="#cpy"/></svg></div>
        <div class="tb"><svg class="i"><use href="#del"/></svg></div>
        <div class="tb"><svg class="i"><use href="#cpy"/></svg></div>
        <div class="tb"><svg class="i"><use href="#sel"/></svg></div>
        <div class="tb tb-more"><svg viewBox="0 0 8 6" width="8" height="6"><path fill="#555" d="M0 0l3.500 3L0 6zM4 0l3.500 3L4 6z"/></svg></div>
      </div>
      <div class="csearch"><span>搜索构件...</span><svg class="i off"><use href="#mag"/></svg></div>
      <div class="tree">
        <div class="th"><b class="ar tri"></b>楼层框架梁</div>
        <div class="ti on"><span>KL-1 &lt;2&gt;</span></div>
        <div class="ti"><span>KL-5 &lt;1&gt;</span></div>
        <div class="ti"><span>KL-2 &lt;1&gt;</span></div>
        <div class="ti"><span>KL-3 &lt;1&gt;</span></div>
        <div class="ti"><span>KL-4 &lt;1&gt;</span></div>
        <div class="ti"><span>KL-6 &lt;1&gt;</span></div>
        <div class="ti"><span>KL-7 &lt;1&gt;</span></div>
        <div class="ti"><span>KL-8 &lt;4&gt;</span></div>
        <div class="ti"><span>KL-9 &lt;1&gt;</span></div>
        <div class="th"><b class="ar tri"></b>非框架梁</div>
      </div>
      <i class="cscroll"></i>
    </section>
    <section class="panel prop">
      <div class="phead"><i class="grip"></i><span class="ptab on">属性列表</span><span class="ptab">图层管理</span><svg class="px" viewBox="0 0 10 10"><path stroke="#999" d="M.5.500l9 9M9.500.500l-9 9"/></svg></div>
      <div class="phd"><b class="ar tri"></b>基础属性</div>
      <div class="pr blue"><label>名称</label><div>KL-1</div></div>
      <div class="pr blue"><label>结构类别</label><div>楼层框架梁</div></div>
      <div class="pr"><label>跨数量</label><div>7</div></div>
      <div class="pr blue"><label>截面宽度(mm)</label><div>250</div></div>
      <div class="pr blue"><label>截面高度(mm)</label><div>400</div></div>
      <div class="pr"><label>轴线距梁左...</label><div>(125)</div></div>
      <div class="pr blue"><label>箍筋</label><div><sup class="rb">Φ</sup>10@100/200(2)</div></div>
      <div class="pr blue"><label>胶数</label><div>2</div></div>
      <div class="pr blue"><label>上部通长筋</label><div>2<sup class="rb">Φ</sup>25</div></div>
      <div class="pr blue"><label>下部通长筋</label><div>3<sup class="rb">Φ</sup>25</div></div>
      <div class="pr blue"><label>侧面构造或...</label><div></div></div>
      <div class="pr blue"><label>拉筋</label><div></div></div>
      <div class="pr blue"><label>材质</label><div>现浇混凝土</div></div>
      <div class="pr blue"><label>混凝土类型</label><div>(现浇混凝土&nbsp;&nbsp;&nbsp;碎石5～40mm...</div></div>
      <div class="pr blue"><label>混凝土强度...</label><div>C30</div></div>
      <div class="pr blue"><label>混凝土外加剂</label><div>(无)</div></div>
      <i class="pscroll"></i>
    </section>
  </div>

  <div class="canvas">
    <svg class="draw" viewBox="629 188 1007 822" width="1007" height="822">
      <rect x="629" y="188" width="1007" height="822" fill="#000"/>
      <rect x="629" y="188" width="1007" height="286" fill="#9068b2"/>
      <rect x="715" y="188" width="49" height="187" fill="#2bdc2b"/>
      <rect x="629" y="425" width="61" height="48" fill="#1478ff"/>
      <rect x="690" y="375" width="99" height="99" fill="#8c00ff"/>
      <path fill="#ffff00" d="M739 398L755 424H1636V473H696z"/>
      <path stroke="#f02020" d="M739 188V398M629 424H715"/>
      <path stroke="#ff8a00" d="M755 424.500H1636"/>
      <path stroke="#6fb0f5" d="M629 473.500H1636"/>
      <rect x="790.500" y="342.500" width="110" height="54" fill="none" stroke="#d6c8e4" stroke-width="1.500"/>
      <rect x="1176.500" y="342.500" width="110" height="54" fill="none" stroke="#d6c8e4" stroke-width="1.500"/>
      <text x="609" y="376" font-size="45" fill="#6f9a55" class="ct">C25</text>
      <text x="1574" y="376" font-size="45" fill="#6f9a55" class="ct">4C25</text>
      <path stroke="#1f5f1f" d="M739.500 474V985"/>
      <path stroke="#1f3d1f" d="M629 719.500H1636M629 768.500H1636"/>
      <path stroke="#1f7a1f" d="M710 747L768 692"/>
      <circle cx="648" cy="769" r="11" fill="none" stroke="#0d5a2a"/>
      <circle cx="641" cy="424" r="11" fill="none" stroke="#0f7a2f"/>
      <text x="641" y="430" font-size="15" fill="#fff" text-anchor="middle" class="ct">A</text>
      <circle cx="739" cy="997" r="11" fill="none" stroke="#0f7a2f"/>
      <text x="739" y="1003" font-size="15" fill="#fff" text-anchor="middle" class="ct">5</text>
      <text x="647" y="775" font-size="17" fill="#fff" text-anchor="middle" class="ct">1750</text>
      <text x="1231" y="873" font-size="17" fill="#fff" text-anchor="middle" class="ct">5000</text>
      <path stroke="#16d016" stroke-width="3" d="M678 959V935"/><path fill="#16d016" d="M678 926l-5 11h10z"/>
      <path stroke="#f01818" stroke-width="3" d="M678 959H702"/><path fill="#f01818" d="M709 959l-11-5v10z"/>
      <circle cx="678" cy="959" r="3.500" fill="#1450e0"/>
      <text x="679" y="929" font-size="16" fill="#16d016" text-anchor="middle" class="ct">Y</text>
      <text x="715" y="965" font-size="16" fill="#f01818" text-anchor="middle" class="ct">X</text>
    </svg>
    <div class="vtool">
      <svg class="vi"><use href="#pln"/></svg>
      <svg class="vi" viewBox="0 0 24 24"><path class="k" d="M2 8l5-5h15v14l-5 5H2zM2 8h15v14M17 8l5-5"/><text x="4" y="19" font-size="8" font-weight="700" class="ct tf">3D</text></svg>
      <svg class="vi"><use href="#cub"/></svg><b class="ar dk big-ar"></b>
      <svg class="vi"><use href="#cuf"/></svg><b class="ar dk big-ar"></b>
      <svg class="vi"><use href="#frm"/></svg>
      <svg class="vi up2"><use href="#cbd"/></svg>
      <hr>
      <svg class="vi"><use href="#lst"/></svg>
    </div>
    <div class="hdl hl-l"><svg viewBox="0 0 6 10" width="6" height="10"><path fill="none" stroke="#aaa" d="M5 1L1 5l4 4"/></svg></div>
    <div class="hdl hl-r"><svg viewBox="0 0 6 10" width="6" height="10"><path fill="none" stroke="#aaa" d="M1 1l4 4-4 4"/></svg></div>
    <div class="dlg">
      <div class="dh"><span>5 跨下部筋</span><b class="dpin"></b><svg viewBox="0 0 10 10" width="11" height="11"><path stroke="#777" d="M.5.500l9 9M9.500.500l-9 9"/></svg></div>
      <div class="dr active"><label>下部筋</label><div class="dv"><i class="caret"></i><em class="more">···</em></div></div>
      <div class="dr"><label>箍筋</label><div class="dv"><sup class="rb">Φ</sup>10@100/200(2)</div></div>
      <div class="dr"><label>胶数</label><div class="dv">2</div></div>
      <div class="dr"><label>截面</label><div class="dv">250*400</div></div>
      <div class="dr"><label>侧面原位筋</label><div class="dv"></div></div>
      <div class="dr"><label>距左边线距离</label><div class="dv">125</div></div>
    </div>
  </div>

  <aside class="disp">
    <div class="phead"><i class="grip"></i><span class="ptitle">显示设置</span><svg class="px" viewBox="0 0 10 10"><path stroke="#999" d="M.5.500l9 9M9.500.500l-9 9"/></svg></div>
    <div class="dtabs"><span class="dtab on">图元显示</span><span class="dtab">楼层显示</span></div>
    <div class="dtable">
      <div class="dt hdr"><div>图层构件</div><div>显示图元</div><div>显示名称</div></div>
      <div class="dt l0"><div><i class="ex"></i>所有构件</div><div><i class="cb pt"></i></div><div><i class="cb"></i></div></div>
      <div class="dt l1"><div><i class="ex"></i>施工段</div><div><i class="cb pt"></i></div><div><i class="cb"></i></div></div>
      <div class="dt l2"><div>土方工程</div><div><i class="cb"></i></div><div><i class="cb"></i></div></div>
      <div class="dt l2"><div>基础工程</div><div><i class="cb"></i></div><div><i class="cb"></i></div></div>
      <div class="dt l2"><div>主体结构</div><div><i class="cb on"></i></div><div><i class="cb"></i></div></div>
      <div class="dt l2"><div>二次结构</div><div><i class="cb"></i></div><div><i class="cb"></i></div></div>
      <div class="dt l2"><div>装饰装修</div><div><i class="cb"></i></div><div><i class="cb"></i></div></div>
      <div class="dt l2"><div>外墙工程</div><div><i class="cb"></i></div><div><i class="cb"></i></div></div>
      <div class="dt l2"><div>其它土建</div><div><i class="cb"></i></div><div><i class="cb"></i></div></div>
      <div class="dt l2"><div>钢筋工程</div><div><i class="cb on"></i></div><div><i class="cb"></i></div></div>
      <div class="dt l1"><div><i class="ex"></i>轴线</div><div><i class="cb on"></i></div><div><i class="cb dis"></i></div></div>
      <div class="dt l2"><div>轴网</div><div><i class="cb on"></i></div><div><i class="cb dis"></i></div></div>
      <div class="dt l2"><div>辅助轴线</div><div><i class="cb on"></i></div><div><i class="cb dis"></i></div></div>
      <div class="dt l1"><div><i class="ex"></i>柱</div><div><i class="cb pt"></i></div><div><i class="cb"></i></div></div>
      <div class="dt l2"><div>柱</div><div><i class="cb on"></i></div><div><i class="cb"></i></div></div>
      <div class="dt l2"><div>构造柱</div><div><i class="cb on"></i></div><div><i class="cb"></i></div></div>
      <div class="dt l2"><div>砌体柱</div><div><i class="cb"></i></div><div><i class="cb"></i></div></div>
      <div class="dt l2"><div>约束边缘非阴...</div><div><i class="cb on"></i></div><div><i class="cb"></i></div></div>
      <div class="dt l1"><div><i class="ex"></i>墙</div><div><i class="cb pt"></i></div><div><i class="cb"></i></div></div>
      <div class="dt l2"><div>剪力墙</div><div><i class="cb on"></i></div><div><i class="cb"></i></div></div>
      <div class="dt l2"><div>人防门框墙</div><div><i class="cb on"></i></div><div><i class="cb"></i></div></div>
      <div class="dt l2"><div>砌体墙</div><div><i class="cb on"></i></div><div><i class="cb"></i></div></div>
      <div class="dt l2"><div>砌体加筋</div><div><i class="cb"></i></div><div><i class="cb"></i></div></div>
      <div class="dt l2"><div>保温墙</div><div><i class="cb"></i></div><div><i class="cb"></i></div></div>
      <div class="dt l2"><div>暗梁</div><div><i class="cb"></i></div><div><i class="cb"></i></div></div>
      <div class="dt l2"><div>墙垛</div><div><i class="cb"></i></div><div><i class="cb"></i></div></div>
      <div class="dt l2"><div>幕墙</div><div><i class="cb on"></i></div><div><i class="cb"></i></div></div>
      <div class="dt l1"><div><i class="ex"></i>门窗洞</div><div><i class="cb"></i></div><div><i class="cb"></i></div></div>
      <div class="dt l2"><div>门</div><div><i class="cb"></i></div><div><i class="cb"></i></div></div>
      <div class="dt l2"><div>窗</div><div><i class="cb"></i></div><div><i class="cb"></i></div></div>
      <div class="dt l2"><div>门联窗</div><div><i class="cb"></i></div><div><i class="cb"></i></div></div>
      <div class="dt l2"><div>墙洞</div><div><i class="cb"></i></div><div><i class="cb"></i></div></div>
      <div class="dt l2"><div>带形窗</div><div><i class="cb"></i></div><div><i class="cb"></i></div></div>
      <div class="dt l2"><div>带形洞</div><div><i class="cb"></i></div><div><i class="cb"></i></div></div>
      <i class="dscroll"></i>
    </div>
    <div class="dfoot"><span class="rstb">恢复默认设置</span></div>
  </aside>
</main>

<footer class="status">
  <span class="s1">层高：3.58</span><span class="s2">标高：0~3.58</span><span class="s3">选中图元：1(2)</span><span class="s4">隐藏图元：0</span>
  <div class="sbtns">
    <span class="sb"><svg class="i"><use href="#sb1"/></svg></span>
    <span class="sb w35 sel"><svg class="i"><use href="#sb2"/></svg><b class="ar dk"></b></span>
    <span class="sb w26 gray"><svg class="i"><use href="#sb3"/></svg></span>
    <span class="sb w34 sel"><svg class="i"><use href="#sb4"/></svg><b class="ar dk"></b></span>
    <span class="sb w35 sel"><svg class="i"><use href="#sb5"/></svg><b class="ar dk"></b></span>
    <span class="sb"><svg class="i"><use href="#sb6"/></svg></span>
    <span class="sb"><svg class="i"><use href="#sb7"/></svg></span>
  </div>
  <svg class="i mvh"><use href="#mvh"/></svg>
  <span class="hint">按鼠标左键选择梁图元，按右键或 ESC 退出；可以通过回车键及 Shift+\"→←↑\" 光标键在跨之间、上下输入框之间进行切换</span>
</footer>

<div class="taskbar">
  <svg class="orb" viewBox="0 0 36 36"><circle cx="18" cy="18" r="17" fill="#1c4f86" stroke="#9cc4e6"/><circle cx="18" cy="18" r="13" fill="#2e74b5"/><path fill="#e8452c" d="M9 11l8-2v8l-8 1z"/><path fill="#7cba2e" d="M19 9l8 1v8l-8-1z"/><path fill="#2f8be0" d="M9 20l8-1v8l-8-1z"/><path fill="#f6b91e" d="M19 19l8 1v7l-8-1z"/></svg>
  <i class="tgrip"></i>
  <div class="tbtn"><svg viewBox="0 0 24 32" width="24" height="32"><path fill="#1e90e8" d="M19 3C10 0 2 7 2 17c0 9 7 14 13 13 6-2 8-8 5-12-2-3-6-3-8-1l3 3c1-1 3 0 3 2s-3 4-6 2c-4-2-4-9 0-13 2-2 5-3 8-2z"/></svg></div>
  <div class="tbtn"><svg viewBox="0 0 32 32" width="30" height="30"><circle cx="16" cy="16" r="12" fill="#6cc02a"/><path fill="#fff" d="M9 15h14a7 7 0 0 0-14 0zM9 18a7 7 0 0 0 13 3h-4a4 4 0 0 1-5-3z"/><path fill="none" stroke="#6cc02a" stroke-width="2" d="M4 27C10 20 20 8 28 4"/></svg></div>
  <div class="tbtn cur"><svg viewBox="0 0 32 38" width="30" height="36"><rect x="1" y="1" width="30" height="36" rx="4" fill="#2f7bf0"/><path fill="#fff" d="M7 12L23 6v7l-5 2v15l-5-5V15l-6 2z"/></svg></div>
  <div class="tray">
    <i class="tgrip"></i>
    <svg class="tr" viewBox="0 0 16 16"><rect x="1" y="5" width="14" height="10" rx="1" fill="#d0d3d6"/><path stroke="#777" d="M3 8h10M3 11h10M8 5V2h5"/></svg>
    <svg class="tr" viewBox="0 0 16 16"><circle cx="8" cy="8" r="7.500" fill="#1a2d9c" stroke="#dde"/><path fill="none" stroke="#fff" stroke-width="1.800" d="M5.500 6a2.500 2.500 0 1 1 3.500 2.500c-1 .5-1 1-1 2M8 11.500v1.500"/></svg>
    <div class="tr2"><svg viewBox="0 0 10 10" width="10" height="10"><path fill="none" stroke="#fff" d="M.5 3.500h6v6h-6zM3 3V.5h6.500v6H7"/></svg><b class="ar wh"></b></div>
    <svg class="tr" viewBox="0 0 16 20"><path fill="#1e90e8" d="M13 2C6 0 1 5 1 11c0 5 4 8 8 7 4-1 5-5 3-8-1-2-4-2-5 0l2 2c1-1 2 0 2 1s-2 3-4 1c-2-2-2-6 1-8 1-1 3-1 5 0z"/></svg>
    <svg class="tr" viewBox="0 0 16 16"><circle cx="8" cy="8" r="7.500" fill="#6cc02a"/><path fill="#fff" d="M4 7h8a4 4 0 0 0-8 0zM4 9a4 4 0 0 0 7 2H9a2 2 0 0 1-3-2z"/></svg>
    <svg class="tr" viewBox="0 0 16 20"><rect x="3" y="1" width="6" height="8" fill="#889"/><rect x="2" y="8" width="9" height="10" rx="1" fill="#555c68"/><circle cx="11" cy="14" r="5" fill="#3aa63a"/><path fill="none" stroke="#fff" d="M9 14l2 2 2-4"/></svg>
    <svg class="tr" viewBox="0 0 16 16"><circle cx="8" cy="8" r="7.500" fill="#2f9a3a" stroke="#f2d21e" stroke-width="1.500"/><path fill="#f2d21e" d="M6.500 3h3v3.500H13v3H9.500V13h-3V9.500H3v-3h3.500z"/></svg>
    <svg class="tr" viewBox="0 0 16 16"><path fill="#d9d9d9" d="M1 5h4l5-4v14l-5-4H1z"/><path fill="#c63a2a" d="M5 5l5-4v14l-5-4z"/><path stroke="#e8c9c0" fill="none" d="M12 4q2 4 0 8"/></svg>
    <svg class="tr" viewBox="0 0 16 16"><path fill="#fff" d="M1 12h2v3H1zM5 9h2v6H5zM9 5h2v10H9zM13 1h2v14h-2z"/></svg>
    <svg class="tr" viewBox="0 0 16 16"><path fill="#e6e6e6" d="M1 5h3l4-4v14l-4-4H1z"/><path stroke="#e6e6e6" fill="none" d="M10 5q2 3 0 6M12 3q3 5 0 10"/></svg>
    <div class="clock"><span>8:33 周六</span><span>2024/3/23</span></div>
    <span class="desk"></span>
    <i class="peek"></i>
  </div>
</div>
</div>
</body>
</html>
```

FILE: styles.css
```css
*{box-sizing:border-box}
html,body{margin:0;padding:0;height:100%;overflow:hidden}
body{font:12px/16px "Noto Sans CJK SC","Noto Sans",sans-serif;color:#3a3a3a;background:#fff}
.defs{position:absolute}
svg{display:block;flex:none}
.k{fill:none;stroke:currentColor}
.b{fill:none;stroke:var(--ac)}
.bw{fill:#fff;stroke:var(--ac)}
.l{fill:var(--lc);stroke:var(--ac)}
.f{fill:var(--ac);stroke:none}
.r{fill:none;stroke:var(--rd)}
.tf{fill:var(--ac)}
.i{width:16px;height:16px;color:#555c68;--ac:#1c7cf0;--lc:#cfe2fa;--rd:#e3242b}
.off .i,.i.off{color:#c9c9c9;--ac:#c9c9c9;--lc:#ededed;--rd:#c9c9c9}
.off{color:#bdbdbd}
.ar{display:inline-block;width:0;height:0;border:3px solid transparent;border-top:4px solid #8a8a8a;border-bottom:0;margin-left:3px;flex:none}
.ar.dk{border-top-color:#5b5b5b}
.ar.wh{border-top-color:#ddd;margin:2px 0 0 2px}
.ar2{margin-left:8px;border-width:4px;border-top-width:5px;border-bottom-width:0;vertical-align:1px}

.screen{width:1920px;height:1080px;display:flex;flex-direction:column;overflow:hidden}

/* title bar */
.title{height:27px;background:#000;display:flex;align-items:center;position:relative;flex:none}
.qat{display:flex;align-items:center;gap:18px;padding-left:5px;height:27px;--ac:#1f86ff}
.qat .i{color:#6a6a6a;--ac:#1f86ff}
.qat .i.dim{color:#5c5c5c}
.logo{width:18px;height:18px;margin-right:3px}
.qa2{display:flex;align-items:center;gap:0;width:16px}
.qa2 .ar{margin-left:3px;border-top-color:#888}
.qmore{width:8px;height:6px;border-top:1px solid #bbb;position:relative;margin-left:0}
.qmore::after{content:"";position:absolute;left:0;top:2px;border:4px solid transparent;border-top:4px solid #bbb;border-bottom:0}
.ttl{position:absolute;left:0;right:0;top:4px;text-align:center;color:#f2f2f2;font-size:12.500px;line-height:18px;pointer-events:none}
.win{margin-left:auto;display:flex;align-items:center;gap:25px;padding-right:14px}
.w-min{width:10px;height:2px;background:#9a9a9a;margin-top:4px}
.w-res,.w-cls{width:10px;height:10px}
.w-res{width:11px;height:11px}

/* tab row */
.tabs{height:28px;flex:none;display:flex;align-items:center;padding:6px 0 0 22px;gap:25.700px;border-bottom:1px solid #eee;font-size:13px;color:#333}
.tab{line-height:18px;position:relative}
.tab.on{color:#1374e0;font-weight:500}
.tab.on::after{content:"";position:absolute;left:-3px;right:-3px;top:19px;height:2px;background:#1478e6}
.tabr{margin-left:auto;display:flex;align-items:center;height:100%}
.srch{width:319px;height:17px;border:1px solid #ddd;border-radius:3px;display:flex;align-items:center;justify-content:space-between;padding:0 5px 0 4px;color:#aaa;font-size:12px}
.srch .i{width:12px;height:12px}
.ava{display:flex;align-items:center;gap:4px;margin-left:6px;font-size:12px;width:52px}
.ava svg{width:15px;height:19px}
.t1{margin-left:3px}
.t2{margin-left:9px;width:17px;height:17px}
.qm{font-size:15px;margin-left:6px;display:flex;align-items:center;color:#444;width:20px}
.qm .ar{margin-left:2px}
.t3{margin-left:6px}
.cr{width:14px;height:8px;margin:0 6px 0 9px}

/* ribbon */
.ribbon{height:102px;flex:none;display:grid;grid-template-columns:233px 193px 276px 238px 68px 250px 78px 502px 1fr;padding-top:3px;border-bottom:2px solid #a4d2f8}
.grp{height:94px;border-right:1px solid #e2e2e2;display:flex;flex-direction:column;min-width:0}
.grp:nth-child(8){border-right:1px solid #d8d8d8}
.gb{flex:1;display:flex;padding-top:1.500px;min-height:0}
.gl{height:18px;line-height:18px;text-align:center;flex:none;color:#3a3a3a}
.g2 .gb{padding-left:10px}
.g3 .gb{padding-left:11px}
.g4 .gb{padding-left:12px}
.g5 .gb{padding-left:9px}
.g6 .gb{padding-left:11px}
.g7 .gb{padding-left:7px}
.g8 .gb{padding-left:7px}
.col{display:flex;flex-direction:column;flex:none}
.w33{width:33px}.w53{width:53px}.w54{width:54px}.w63{width:63px}.w67{width:67px}.w79{width:79px}.w91{width:91px}.w98{width:98px}.w99{width:99px}.w102{width:102px}.w111{width:111px}
.ri{height:24px;display:flex;align-items:center;gap:3px;white-space:nowrap;flex:none}
.ri.pl{padding-left:4px}
.ri.hl{background:#c3d9f2;border-radius:3px;height:21px;width:85px;margin:1.500px 0}
.nl3{margin-left:-3px}
.nl3 .cb{width:13px;height:13px}
.big{display:flex;flex-direction:column;align-items:center;flex:none;padding-top:4px}
.bigi{height:28px;width:28px}
.big span{margin-top:8px;line-height:16px;white-space:nowrap}
.bg1{width:24px;margin:0 14px 0 16px}
.bg1 .bigi{width:24px}
.bg6{width:36px;margin-right:9px}
.bg7{width:48px}
.bg7 .bigi{width:30px}
.bar{margin:8px 0 0}

/* selector bar */
.selbar{height:31px;flex:none;background:#f3fafe;border-bottom:1px solid #a9d1ee;display:flex;align-items:center}
.cmb{width:100px;height:100%;border-right:1px solid #d6e4ec;display:flex;align-items:center;justify-content:space-between;padding:0 6px 0 3px;flex:none}
.sck{display:flex;align-items:center;gap:4px;margin-left:11px}
.note{margin-left:27px}

/* checkboxes */
.cb{display:inline-block;width:14px;height:14px;border:1px solid #8d8d8d;border-radius:3px;background:#fff;position:relative;flex:none}
.cb.on{background:#2f7fe6;border-color:#2f7fe6}
.cb.on::after{content:"";position:absolute;left:4px;top:1px;width:4px;height:8px;border:solid #fff;border-width:0 2px 2px 0;transform:rotate(45deg)}
.cb.pt{background:#9fcbff;box-shadow:inset 0 0 0 1px #fff}
.cb.dis{background:#f0f0f0;border-color:#bdbdbd}

/* main */
.main{flex:1;display:flex;min-height:0;background:#fff;height:822px}
.phead{height:27px;background:#eeeff2;display:flex;align-items:center;position:relative;flex:none}
.grip{height:14px;margin-left:9px;background:radial-gradient(circle,#888 1.200px,transparent 1.500px) 0 0/3px 5px;flex:none;width:7px}
.ptitle{margin:-2px 0 0 9px}
.px{width:10px;height:10px;position:absolute;right:10px;top:9px}

.nav{width:327px;margin:2px 0 0 1px;flex:none;display:flex;flex-direction:column;border-right:1px solid #e6e6e6}
.nbody{flex:1;position:relative;padding-right:13px;min-height:0}
.nv{height:42px;background:#f5f6f8;display:flex;align-items:center;padding-left:11px}
.nv.act{background:#ecedf0;color:#3f7de8}
.ni{width:24px;height:24px;margin-right:14px}
.ns{height:28px;line-height:28px;padding-left:21px}
.ns.act{color:#1f86f0}
.lk{width:10px;height:12px;margin-left:10px}
.tag{margin:-12px 0 0 auto;width:54px;height:17px;line-height:17px;font-style:normal;font-size:11px;text-align:center;background:#fbe3b9;color:#a2712a;border-radius:9px 0 0 9px}
.nscroll{position:absolute;right:4px;top:12px;bottom:5px;width:5px;background:#ececec;border-radius:3px}

.mid{width:295px;margin:2px 0 0 3px;flex:none;display:flex;flex-direction:column;gap:6px}
.panel{border:1px solid #d4d4d4;border-top:0;position:relative;overflow:hidden;background:#fff}
.comp{height:358px}
.prop{height:454px}
.ptab{height:27px;line-height:25px;width:68px;text-align:center;font-size:12px}
.ptab.on{background:#fff;color:#1f7fe8;margin-left:4px}
.ptab:not(.on){margin-left:10px;width:48px}
.tbar{display:flex;gap:9px;margin-top:7px;padding-left:11px}
.tb{width:32px;height:26px;background:#f5f5f5;border-radius:4px;display:flex;align-items:center;justify-content:center;flex:none}
.tb-split{width:45px;justify-content:flex-start;padding-left:8px;position:relative}
.tb-split i{position:absolute;left:32px;top:0;bottom:0;width:1px;background:#fff}
.tb-split .ar{margin-left:14px}
.tb-more{width:26px;margin-left:28px;border:1px solid #dcdcdc;background:#f7f7f7}
.csearch{height:26px;margin:7px 9px 0 9px;border-radius:13px;background:#f5f5f5;display:flex;align-items:center;justify-content:space-between;padding:0 10px 0 12px;color:#9a9a9a}
.csearch .i{width:13px;height:13px}
.tree{margin-top:9px;padding-left:6px}
.th{height:23.500px;line-height:23px;display:flex;align-items:center}
.tri{margin:0 4px 0 0;border-width:3px 4px 0;border-color:#888 transparent transparent}
.ti{height:24px;display:flex;align-items:center;padding-left:15px}
.ti span{display:block;width:66px;height:21px;line-height:21px;padding-left:4px;border-radius:2px;white-space:nowrap;letter-spacing:.35px;word-spacing:3px}
.ti.on span{background:#c3d9f2}
.cscroll{position:absolute;left:281px;top:114px;width:4px;height:104px;background:#ebebeb;border-radius:2px}

.phd{height:23px;margin-top:2px;width:276px;background:#ececec;display:flex;align-items:center;padding-left:9px}
.phd .tri{margin-right:7px}
.pr{height:25px;display:flex;align-items:center;padding-left:15px}
.phd + .pr{margin-top:1px}
.pr label{width:86px;flex:none;white-space:nowrap;overflow:hidden}
.pr.blue label{color:#2a7fe2}
.pr div{width:175px;height:21px;line-height:19px;border:1px solid #e2e2e2;padding-left:2px;white-space:nowrap;overflow:hidden;letter-spacing:.3px}
.rb{font-size:11px;line-height:0;vertical-align:3px;margin:0 1px;text-decoration:underline}
.pscroll{position:absolute;left:284px;top:40px;width:4px;height:244px;background:#ebebeb;border-radius:2px}

/* canvas */
.canvas{width:1007px;height:822px;margin-left:3px;flex:none;position:relative;overflow:hidden}
.ct{font-family:"Open Sans","Noto Sans",sans-serif}
.vtool{position:absolute;left:974px;top:0;width:33px;height:245px;background:#fff;display:flex;flex-direction:column;align-items:center;padding-top:11.500px;gap:9px}
.vi{width:21px;height:21px;color:#555c68;--ac:#1c7cf0;--lc:#cfe2fa;--rd:#e3242b}
.up2{margin-top:-2px}
.big-ar{margin:-3px 0 -2px;border-width:4px;border-top-width:5px;border-bottom-width:0}
.vtool hr{width:22px;height:1px;border:0;background:#666;margin:-3px 0}
.hdl{position:absolute;top:381px;width:15px;height:60px;background:#474747;display:flex;align-items:center;justify-content:center}
.hl-l{left:0;clip-path:polygon(0 0,100% 12%,100% 88%,0 100%)}
.hl-r{right:0;clip-path:polygon(0 12%,100% 0,100% 100%,0 88%)}

.dlg{position:absolute;left:547px;top:313px;width:189px;height:161px;background:#fff;padding:0 3px 0 1px;display:flex;flex-direction:column}
.dh{height:19px;display:flex;align-items:center;flex:none;position:relative;padding:0 7px 2px 0;word-spacing:2px}
.dh span{margin-right:auto}
.dpin{border:3px solid transparent;border-bottom:4px solid #777;border-top:0;margin-right:19px}
.dr{height:23px;display:flex;border-bottom:1px solid #ddd;border-left:1px solid #ddd;border-right:1px solid #ddd;flex:none}
.dr:nth-child(2){border-top:1px solid #ddd}
.dr:nth-child(4){height:24px}
.dr label{width:80px;flex:none;border-right:1px solid #ddd;padding-left:3px;line-height:21px;white-space:nowrap}
.dv{flex:1;padding-left:3px;line-height:21px;white-space:nowrap;position:relative;min-width:0;letter-spacing:.35px}
.dr.active .dv{outline:2px solid #6aa9ea;outline-offset:-2px}
.caret{position:absolute;left:4px;top:4px;width:1px;height:14px;background:#333}
.more{position:absolute;right:4px;top:3px;width:16px;height:14px;border:1px solid #6aa9ea;border-radius:3px;background:#eef5fd;color:#1c7cf0;font:700 14px/10px "Noto Sans",sans-serif;letter-spacing:-1px;text-align:center}

/* display panel */
.disp{width:279px;margin:2px 0 0 5px;flex:none;display:flex;flex-direction:column;border-left:1px solid #d4d4d4}
.dtabs{height:26px;flex:none;display:flex;align-items:flex-end;gap:3px;padding-left:2px;border-bottom:1px solid #d4d4d4}
.dtab{width:61px;height:23px;line-height:23px;text-align:center;background:#d8d8d8;border-radius:4px 4px 0 0;color:#555}
.dtab.on{background:#fff;border:1px solid #d4d4d4;border-bottom:0;color:#2a80e6}
.dtable{margin:3px 0 0 2px;height:723px;overflow:hidden;position:relative;border-top:1px solid #ddd;border-left:1px solid #ddd;flex:none}
.dt{display:grid;grid-template-columns:133px 63px 63px;height:21px;border-bottom:1px solid #ddd;width:259px;border-right:1px solid #ddd}
.dt>div{display:flex;align-items:center;justify-content:center;border-right:1px solid #ddd;line-height:20px}
.dt>div:last-child{border-right:0}
.dt>div:first-child{justify-content:flex-start;position:relative;white-space:nowrap}
.dt.hdr>div:first-child{justify-content:center}
.l0>div:first-child{padding-left:1px}
.l1>div:first-child{padding-left:11px}
.l2>div:first-child{padding-left:41px}
.ex{width:13px;height:13px;border:1px solid #888;border-radius:2px;margin-right:6px;position:relative;flex:none;background:#fff}
.ex::after{content:"";position:absolute;left:2px;right:2px;top:5px;height:1px;background:#555}
.l2>div:first-child::before{content:"";position:absolute;left:18px;top:-1px;width:16px;height:11px;border-left:1px solid #ddd;border-bottom:1px solid #ddd}
.l1>div:first-child::before{content:"";position:absolute;left:8px;top:10px;width:4px;border-top:1px solid #ddd}
.dscroll{position:absolute;left:264px;top:12px;width:4px;height:203px;background:#ebebeb;border-radius:2px}
.dfoot{flex:1;display:flex;justify-content:flex-end;align-items:flex-start;padding:7px 11px 0 0}
.rstb{width:86px;height:25px;line-height:23px;text-align:center;border:1px solid #d6d6d6;border-radius:3px;background:#f6f6f6}

/* status */
.status{height:30px;flex:none;display:flex;align-items:center;padding-bottom:2px;white-space:nowrap}
.s1{width:92px;padding-left:2px}.s2{width:139px}.s3{width:111px}.s4{width:110px}
.sbtns{display:flex;gap:5px;align-items:center}
.sb{width:24px;height:24px;border:1px solid #aaa;border-radius:3px;display:flex;align-items:center;justify-content:center;background:#fff}
.sb .i{width:15px;height:15px;flex:none}
.sb .ar{margin-left:2px;border-width:2px;border-top-width:3px;border-bottom-width:0}
.sb.sel{background:#d3e5fb;border-color:#3d8ae8}
.w35{width:35px}.w26{width:25px}.w34{width:34px}
.sb.gray{border-color:#ccc}
.sb.gray .i{color:#999}
.mvh{margin:0 4px 0 15px}

/* taskbar */
.taskbar{height:40px;flex:none;display:flex;align-items:center;position:relative;border-top:1px solid #23496a;background:linear-gradient(29deg,transparent 67.500%,rgba(190,225,250,.65) 69%,transparent 70.500%),linear-gradient(90deg,#3a8cc6 0,#4fa3d8 12%,#5db0de 25%,#4f9fd5 40%,#418fca 55%,#2f7ec0 68%,#2170b2 78%,#18548f 90%,#143f72 100%)}
.orb{width:36px;height:36px;margin-left:9px;flex:none}
.tgrip{width:7px;height:28px;background:radial-gradient(circle,#d5e4f0 1px,transparent 1.200px) 0 0/3px 4px;margin-left:12px;flex:none}
.tbtn{width:58px;height:38px;margin-left:5px;border:1px solid rgba(20,50,80,.7);border-radius:3px;background:linear-gradient(180deg,rgba(255,255,255,.25),rgba(255,255,255,.06));box-shadow:inset 0 0 0 1px rgba(255,255,255,.35);display:flex;align-items:center;justify-content:center;flex:none}
.tgrip + .tbtn{margin-left:11px}
.tbtn.cur{background:linear-gradient(180deg,rgba(255,255,255,.55),rgba(255,255,255,.25));margin-left:4px}
.tray{margin-left:auto;display:flex;align-items:center;height:100%;color:#fff}
.tray .tgrip{margin:0 6px 0 0;height:26px}
.tr{width:16px;height:16px;margin-right:8px}
.tr2{display:flex;flex-direction:column;align-items:center;margin-right:8px;width:14px;gap:3px}
.clock{display:flex;flex-direction:column;align-items:center;width:70px;line-height:17px;font-size:12px;margin-left:6px}
.desk{width:17px;height:13px;background:#fff;margin-left:10px;position:relative}
.desk::after{content:"";position:absolute;left:6px;top:2px;border:4px solid transparent;border-left:5px solid #000;border-right:0}
.peek{width:14px;height:38px;margin-left:11px;border:1px solid rgba(255,255,255,.45);background:rgba(255,255,255,.12)}
```
